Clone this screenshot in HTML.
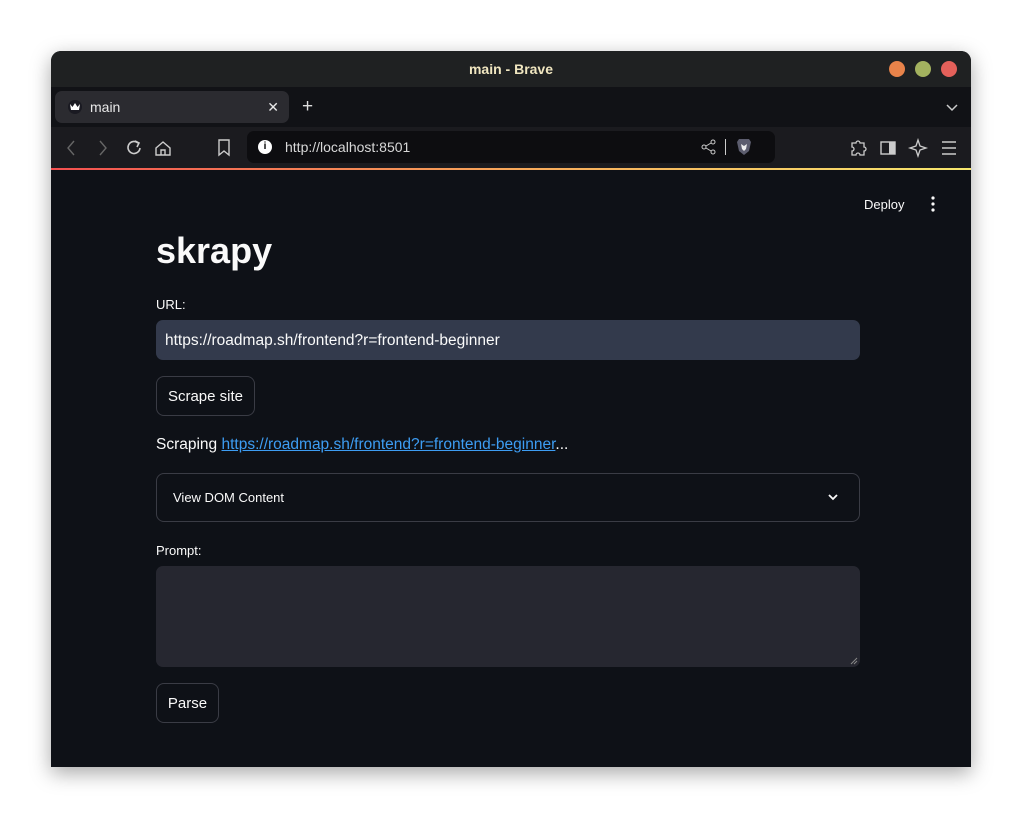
<!DOCTYPE html>
<html><head><style>
*{box-sizing:border-box;margin:0;padding:0}
body{width:1022px;height:818px;background:#fff;font-family:"Liberation Sans","DejaVu Sans",sans-serif;position:relative;overflow:hidden}
.win{position:absolute;left:51px;top:51px;width:920px;height:716px;border-radius:10px 10px 0 0;overflow:hidden;background:#0e1117;box-shadow:0 6px 20px rgba(0,0,0,.35)}
.title{height:36px;background:#1f2122;color:#f0e6c0;font-weight:bold;font-size:14px;text-align:center;line-height:36px}
.dot{position:absolute;top:10px;width:16px;height:16px;border-radius:50%}
.tabs{position:absolute;top:36px;left:0;right:0;height:40px;background:#111216}
.tab{position:absolute;left:4px;top:4px;width:234px;height:32px;background:#2b2b30;border-radius:7px;color:#e8e8e8;font-size:14px;line-height:32px;padding-left:35px}
.tool{position:absolute;top:76px;left:0;right:0;height:41px;background:#1b1b1f}
.url{position:absolute;left:196px;top:4px;width:528px;height:32px;background:#0d0d10;border-radius:7px;color:#d8d8d8;font-size:14px;line-height:32px;padding-left:38px}
.grad{position:absolute;top:117px;left:0;right:0;height:2px;background:linear-gradient(90deg,#f45050,#f7a75a,#f8e86e)}
.c{position:absolute;color:#fafafa}
svg{position:absolute}
</style></head><body>
<div class="win">
<div class="title">main - Brave</div>
<div class="dot" style="left:838px;background:#e8834a"></div>
<div class="dot" style="left:864px;background:#a3b25f"></div>
<div class="dot" style="left:890px;background:#e4605a"></div>
<div class="tabs">
<div class="tab">main<span style="position:absolute;right:10px;top:0;font-size:14px">✕</span></div>
<div style="position:absolute;left:17px;top:13px;width:14px;height:14px;border-radius:50%;background:#1a1a22"></div>
<svg style="left:19px;top:16px" width="10" height="8" viewBox="0 0 10 8"><path d="M0 1L2.5 4L5 0L7.5 4L10 1L9 7H1Z" fill="#fff"/></svg>
<div style="position:absolute;left:251px;top:9px;color:#ddd;font-size:19px">+</div>
<svg style="left:895px;top:14px" width="12" height="12" viewBox="0 0 12 12"><path d="M1 4L6 9L11 4" stroke="#ccc" fill="none" stroke-width="1.5"/></svg>
</div>
<div class="tool">
<svg style="left:14px;top:12px" width="120" height="18" viewBox="0 0 120 18"><path d="M9 2L3 9L9 16" stroke="#666" fill="none" stroke-width="1.4"/><path d="M35 2L41 9L35 16" stroke="#666" fill="none" stroke-width="1.4"/><path d="M73 4A6 6 0 1 0 75 9" stroke="#ccc" fill="none" stroke-width="1.6"/><path d="M70 2L74 4L72 8" stroke="#ccc" fill="none" stroke-width="1.6"/><path d="M91 9L98 3L105 9V16H91Z M96 16V11H100V16" stroke="#ccc" fill="none" stroke-width="1.4"/></svg>
<svg style="left:166px;top:12px" width="14" height="18" viewBox="0 0 14 18"><path d="M2 1H12V16L7 12L2 16Z" stroke="#ccc" fill="none" stroke-width="1.4"/></svg>
<div class="url">http://localhost:8501
<div style="position:absolute;left:11px;top:9px;width:14px;height:14px;border-radius:50%;background:#fff;color:#000;font-size:10px;line-height:14px;text-align:center;font-weight:bold">i</div>
<svg style="left:454px;top:8px" width="16" height="16" viewBox="0 0 16 16"><circle cx="3" cy="8" r="2" stroke="#ccc" fill="none"/><circle cx="12" cy="3" r="2" stroke="#ccc" fill="none"/><circle cx="12" cy="13" r="2" stroke="#ccc" fill="none"/><path d="M5 7L10 4M5 9L10 12" stroke="#ccc"/></svg>
<div style="position:absolute;left:478px;top:8px;width:1px;height:16px;background:#ccc"></div>
<svg style="left:489px;top:7px" width="16" height="18" viewBox="0 0 16 18"><path d="M3 1H13L15 4L13 13L8 17L3 13L1 4Z" fill="#5c5d6e"/><path d="M5 6L8 8L11 6L10 11L8 13L6 11Z" fill="#eee"/></svg>
</div>
<svg style="left:798px;top:11px" width="110" height="20" viewBox="0 0 110 20"><path d="M3 5H7A2 2 0 0 1 11 5H15V9A2 2 0 0 1 15 13V17H11A2 2 0 0 0 7 17H3V13A2 2 0 0 0 3 9Z" stroke="#ccc" fill="none" stroke-width="1.3"/><rect x="32" y="4" width="14" height="12" stroke="#ccc" fill="none" stroke-width="1.4"/><rect x="40" y="4" width="6" height="12" fill="#ccc"/><path d="M69 2L71 8L77 10L71 12L69 18L67 12L61 10L67 8Z" stroke="#ccc" fill="none" stroke-width="1.3"/><path d="M93 4H107M93 10H107M93 16H107" stroke="#ccc" stroke-width="1.4"/></svg>
</div>
<div class="grad"></div>
<div class="c" style="left:813px;top:146px;font-size:13px">Deploy</div>
<svg style="left:879px;top:145px" width="6" height="16" viewBox="0 0 6 16"><circle cx="3" cy="2" r="1.6" fill="#fafafa"/><circle cx="3" cy="8" r="1.6" fill="#fafafa"/><circle cx="3" cy="14" r="1.6" fill="#fafafa"/></svg>
<div class="c" style="left:105px;top:179px;font-size:36px;font-weight:bold">skrapy</div>
<div class="c" style="left:105px;top:246px;font-size:13px">URL:</div>
<div class="c" style="left:105px;top:269px;width:704px;height:40px;background:#333a4c;border-radius:7px;font-size:15.5px;line-height:42px;padding-left:9px">https://roadmap.sh/frontend?r=frontend-beginner</div>
<div class="c" style="left:105px;top:325px;width:99px;height:40px;border:1px solid #3a3c45;border-radius:8px;font-size:15px;line-height:40px;text-align:center">Scrape site</div>
<div class="c" style="left:105px;top:385px;font-size:15.5px">Scraping <span style="color:#3d9df3;text-decoration:underline">https://roadmap.sh/frontend?r=frontend-beginner</span>...</div>
<div class="c" style="left:105px;top:422px;width:704px;height:49px;border:1px solid #3a3c45;border-radius:8px;font-size:13px;line-height:47px;padding-left:16px">View DOM Content</div>
<svg style="left:776px;top:441px" width="12" height="10" viewBox="0 0 12 10"><path d="M2 3L6 7L10 3" stroke="#fafafa" fill="none" stroke-width="1.8"/></svg>
<div class="c" style="left:105px;top:492px;font-size:13px">Prompt:</div>
<div style="position:absolute;left:105px;top:515px;width:704px;height:101px;background:#262730;border-radius:7px"></div>
<svg style="left:799px;top:606px" width="8" height="8" viewBox="0 0 8 8"><path d="M1 7L7 1M4 7L7 4" stroke="#888"/></svg>
<div class="c" style="left:105px;top:632px;width:63px;height:40px;border:1px solid #3a3c45;border-radius:8px;font-size:15px;line-height:40px;text-align:center">Parse</div>
</div>
</body></html>
